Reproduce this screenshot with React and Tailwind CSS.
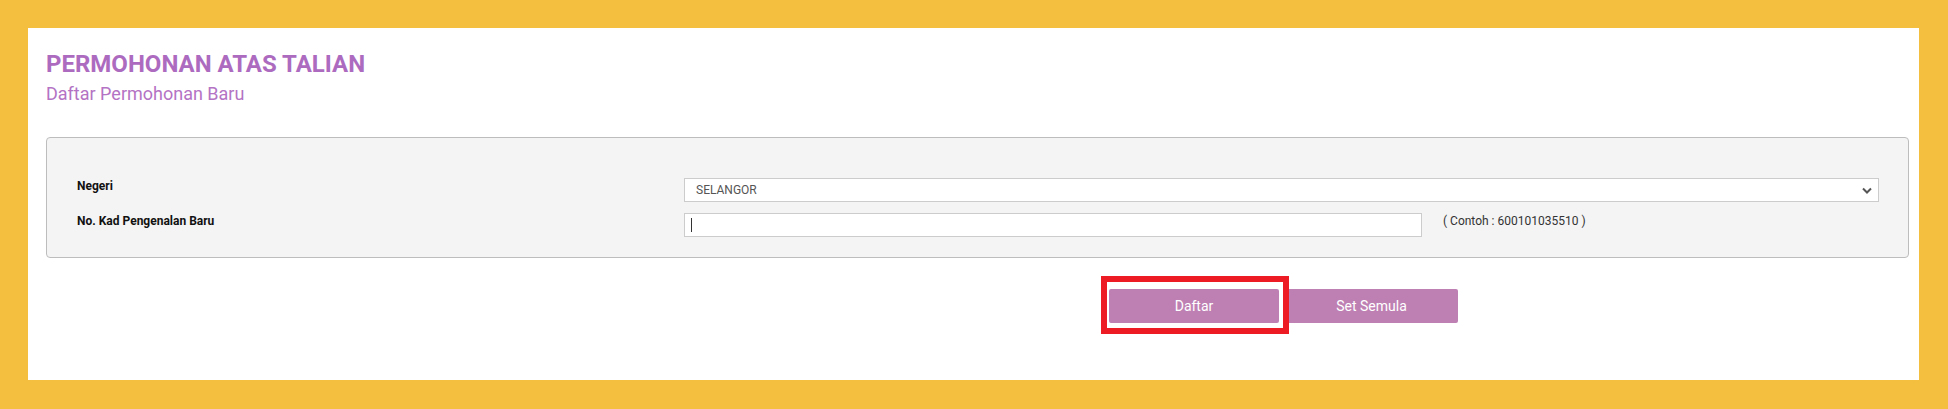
import React from 'react'

function Chevron() {
  return (
    <svg width="10" height="7" viewBox="0 0 10 7" className="shrink-0">
      <polyline points="1,1.5 5,5.5 9,1.5" fill="none" stroke="#555" strokeWidth="2" />
    </svg>
  )
}

function FormPanel() {
  return (
    <div className="ml-[18px] mr-[10px] rounded-[4px] border border-[#bdbdbd] bg-[#f4f4f4] pt-[40px] pb-[20px] pl-[30px] pr-[29px]">
      <div className="grid grid-cols-[607px_1fr] items-start">
        <div className="text-[12px] leading-4 font-bold text-[#111]">Negeri</div>
        <div className="flex h-[24px] items-center justify-between border border-[#cccccc] bg-white pl-[11px] pr-[6px]">
          <span className="text-[12px] text-[#555]">SELANGOR</span>
          <Chevron />
        </div>
      </div>
      <div className="mt-[11px] grid grid-cols-[607px_1fr] items-start">
        <div className="text-[12px] leading-4 font-bold text-[#111]">No. Kad Pengenalan Baru</div>
        <div className="flex items-start">
          <div className="flex h-[24px] w-[738px] items-center border border-[#cccccc] bg-white pl-[6px]">
            <span className="block h-[14px] w-px bg-[#333]" />
          </div>
          <span className="ml-[21px] text-[12px] leading-4 text-[#333]">( Contoh : 600101035510 )</span>
        </div>
      </div>
    </div>
  )
}

export default function App() {
  return (
    <div className="flex h-[409px] w-full bg-[#f4bf3f] pt-[28px] pl-[28px] pr-[29px] pb-[29px] font-['Roboto',sans-serif]">
      <div className="flex-1 bg-white pt-[22px]">
        <div className="pl-[18px]">
          <h1 className="text-[24px] leading-[28px] font-bold text-[#ad6bc0]">PERMOHONAN ATAS TALIAN</h1>
          <div className="mt-[4px] text-[18px] leading-[24px] text-[#b473c4]">Daftar Permohonan Baru</div>
        </div>

        <div className="mt-[31px]">
          <FormPanel />
        </div>

        <div className="mt-[31px] ml-[18px] mr-[10px] pl-[31px] pr-[30px] grid grid-cols-[607px_1fr]">
          <div />
          <div className="flex justify-center gap-[6px] pl-[4px]">
            <div className="relative">
              <button className="h-[34px] w-[170px] rounded-[2px] bg-[#be80b3] text-[14px] text-white">Daftar</button>
              <span className="pointer-events-none absolute left-[-8px] top-[-13px] right-[-10px] bottom-[-11px] border-[6px] border-[#ed1c24]" />
            </div>
            <button className="h-[34px] w-[173px] rounded-[2px] bg-[#be80b3] text-[14px] text-white">Set Semula</button>
          </div>
        </div>
      </div>
    </div>
  )
}
